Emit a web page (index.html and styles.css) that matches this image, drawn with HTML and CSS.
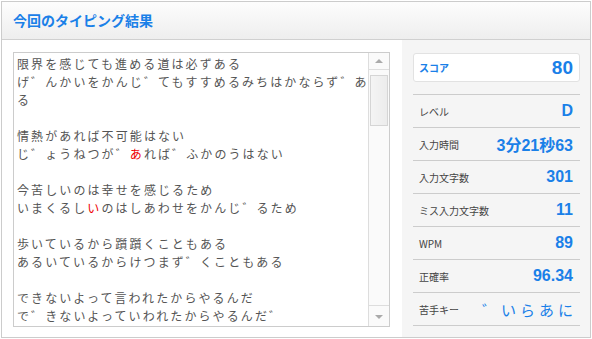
FILE: index.html
```html
<!DOCTYPE html>
<html lang="ja">
<head>
  <meta charset="UTF-8">
  <title>今回のタイピング結果</title>
  <link rel="stylesheet" href="styles.css">
</head>
<body>
  <div class="result">
    <div class="result-head">今回のタイピング結果</div>
    <div class="result-body">
      <div class="result-text">
        <div class="textbox">
          <div class="textbox-inner">
            <p>限界を感じても進める道は必ずある<br>げ゛んかいをかんじ゛てもすすめるみちはかならず゛あ<br>る</p>
            <p>情熱があれば不可能はない<br>じ゛ょうねつが゛<span class="miss">あ</span>れば゛ふかのうはない</p>
            <p>今苦しいのは幸せを感じるため<br>いまくるし<span class="miss">い</span>のはしあわせをかんじ゛るため</p>
            <p>歩いているから躓躓くこともある<br>あるいているからけつまず゛くこともある</p>
            <p>できないよって言われたからやるんだ<br>で゛きないよっていわれたからやるんだ゛</p>
          </div>
          <div class="scrollbar">
            <div class="sb-btn sb-up"></div>
            <div class="sb-track"><div class="sb-thumb"></div></div>
            <div class="sb-btn sb-down"></div>
          </div>
        </div>
      </div>
      <div class="result-side">
        <div class="score">
          <span class="score-label">スコア</span>
          <span class="score-value">80</span>
        </div>
        <ul class="stats">
          <li><span class="stat-label">レベル</span><span class="stat-value">D</span></li>
          <li><span class="stat-label">入力時間</span><span class="stat-value">3分21秒63</span></li>
          <li><span class="stat-label">入力文字数</span><span class="stat-value">301</span></li>
          <li><span class="stat-label">ミス入力文字数</span><span class="stat-value">11</span></li>
          <li><span class="stat-label">WPM</span><span class="stat-value">89</span></li>
          <li><span class="stat-label">正確率</span><span class="stat-value">96.34</span></li>
          <li><span class="stat-label">苦手キー</span><span class="stat-value weak">゛いらあに</span></li>
        </ul>
      </div>
    </div>
  </div>
</body>
</html>
```

FILE: styles.css
```css
body {
  margin: 0;
  font-family: "Liberation Sans", "Noto Sans CJK JP", sans-serif;
  background: #fff;
}

.result {
  margin: 1px;
  width: 590px;
  height: 337px;
  border: 1px solid #ccc;
  box-sizing: border-box;
  display: flex;
  flex-direction: column;
  overflow: hidden;
}

.result-head {
  height: 37px;
  border-bottom: 1px solid #d0d0d0;
  background: linear-gradient(#fdfdfd, #eeeeee);
  color: #1a80e8;
  font-weight: bold;
  font-size: 14px;
  line-height: 36px;
  padding-left: 11px;
  font-family: "Noto Sans CJK JP", sans-serif;
}

.result-body {
  flex: 1;
  display: flex;
}

.result-text {
  flex: 1;
  padding: 12px 0 0 11px;
}

.textbox {
  width: 377px;
  height: 275px;
  border: 1px solid #ccc;
  box-sizing: border-box;
  display: flex;
  background: #fff;
}

.textbox-inner {
  flex: 1;
  overflow: hidden;
  padding: 2px 0 0 3px;
  font-family: "Noto Sans CJK JP", sans-serif;
  font-size: 12px;
  letter-spacing: 2.1px;
  line-height: 18px;
  color: #555;
}

.textbox-inner p {
  margin: 0 0 18px;
  white-space: nowrap;
}

.miss {
  color: #e00;
}

.scrollbar {
  width: 20px;
  border-left: 1px solid #ddd;
  background: #fafafa;
  display: flex;
  flex-direction: column;
}

.sb-btn {
  height: 16px;
  position: relative;
}

.sb-up {
  border-bottom: 1px solid #ddd;
}

.sb-down {
  border-top: 1px solid #ddd;
  height: 20px;
}

.sb-btn::after {
  content: "";
  position: absolute;
  left: 6px;
  top: 6px;
  border-left: 4px solid transparent;
  border-right: 4px solid transparent;
}

.sb-up::after {
  border-bottom: 4px solid #aaa;
}

.sb-down::after {
  top: 9px;
  border-top: 4px solid #aaa;
}

.sb-track {
  flex: 1;
  padding: 5px 0 0 1px;
}

.sb-thumb {
  width: 16px;
  height: 49px;
  border: 1px solid #d5d5d5;
  background: linear-gradient(90deg, #f4f4f4, #ececec);
}

.result-side {
  width: 188px;
  background: #f5f5f5;
  padding: 13px 10px 0 11px;
  box-sizing: border-box;
}

.score {
  height: 29px;
  box-sizing: border-box;
  background: #fff;
  border: 1px solid #e2e2e2;
  border-radius: 3px;
  display: flex;
  align-items: center;
  justify-content: space-between;
  padding: 0 6px 0 5px;
  margin-bottom: 12px;
  color: #1a80e8;
}

.score-label {
  font-family: "Noto Sans CJK JP", sans-serif;
  font-size: 10px;
  font-weight: bold;
}

.score-value {
  font-size: 19px;
  font-weight: bold;
}

.stats {
  list-style: none;
  margin: 0;
  padding: 0;
}

.stats li {
  height: 33px;
  box-sizing: border-box;
  border-top: 1px solid #ccc;
  display: flex;
  align-items: center;
  justify-content: space-between;
  padding: 0 7px 0 6px;
}

.stats li:last-child {
  border-bottom: 1px solid #ccc;
  height: 34px;
}

.stat-label {
  font-family: "Noto Sans CJK JP", sans-serif;
  font-size: 10px;
  color: #444;
}

.stat-value {
  font-size: 16px;
  font-weight: bold;
  color: #1a80e8;
}

.stat-value.weak {
  font-family: "Noto Sans CJK JP", sans-serif;
  font-weight: normal;
  font-size: 15px;
  letter-spacing: 4px;
  margin-right: -4px;
}
```
